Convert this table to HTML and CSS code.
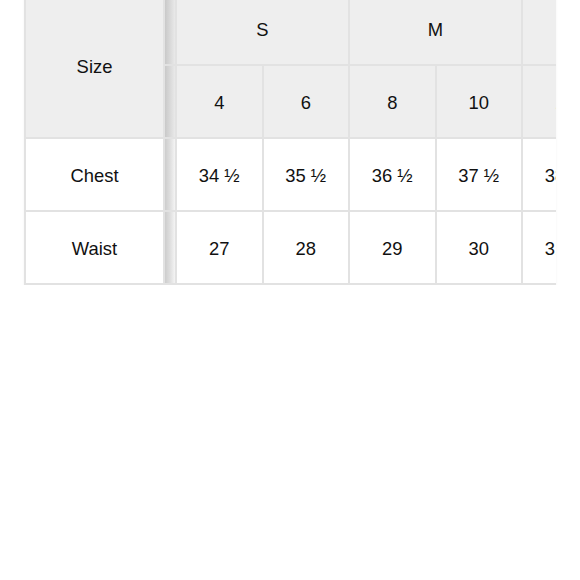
FILE: index.html
```html
<!DOCTYPE html>
<html>
<head>
<meta charset="utf-8">
<link rel="stylesheet" href="styles.css">
</head>
<body>
<div class="wrap">
  <div class="grid">
    <div class="cell head size">Size</div>
    <div class="strip head"></div>
    <div class="cell head span2">S</div>
    <div class="cell head span2">M</div>
    <div class="cell head span2">L</div>

    <div class="strip head"></div>
    <div class="cell head">4</div>
    <div class="cell head">6</div>
    <div class="cell head">8</div>
    <div class="cell head">10</div>
    <div class="cell head">12</div>
    <div class="cell head">14</div>

    <div class="cell">Chest</div>
    <div class="strip"></div>
    <div class="cell">34 ½</div>
    <div class="cell">35 ½</div>
    <div class="cell">36 ½</div>
    <div class="cell">37 ½</div>
    <div class="cell">38 ½</div>
    <div class="cell">39 ½</div>

    <div class="cell">Waist</div>
    <div class="strip"></div>
    <div class="cell">27</div>
    <div class="cell">28</div>
    <div class="cell">29</div>
    <div class="cell">30</div>
    <div class="cell">31 ½</div>
    <div class="cell">32 ½</div>
  </div>
</div>
</body>
</html>
```
FILE: styles.css
```css
html, body {
  margin: 0;
  padding: 0;
  background: #ffffff;
}

body {
  font-family: "Liberation Sans", Arial, sans-serif;
  font-size: 18.4px;
  color: #111111;
}

.wrap {
  margin-top: -7px;
  margin-left: 24px;
  width: 532px;
  overflow: hidden;
  box-shadow: 0 1px 2px rgba(0, 0, 0, 0.06);
}

.grid {
  display: grid;
  width: max-content;
  grid-template-columns: 137px 10px repeat(6, 84.5px);
  grid-template-rows: repeat(4, 71px);
  gap: 2px;
  padding: 0 0 2px 2px;
  background: #e2e2e2;
}

.cell {
  display: flex;
  align-items: center;
  justify-content: center;
  padding-top: 3px;
  background: #ffffff;
  white-space: nowrap;
}

.head {
  background: #eeeeee;
}

.size {
  grid-row: span 2;
}

.span2 {
  grid-column: span 2;
}

.strip {
  background: linear-gradient(to right, #cdcdcd, #e0e0e0 55%, #f4f4f4);
}

.strip.head {
  background: linear-gradient(to right, #c9c9c9, #dadada 55%, #e9e9e9);
}
```
